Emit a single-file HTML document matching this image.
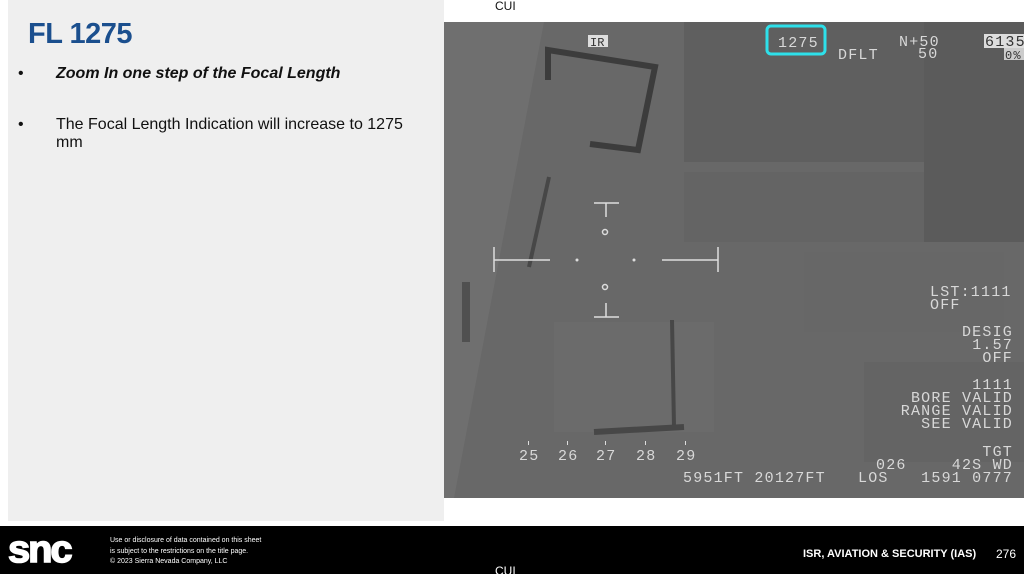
<!DOCTYPE html>
<html><head><meta charset="utf-8"><style>
*{margin:0;padding:0;box-sizing:border-box}
body{width:1024px;height:574px;background:#fff;position:relative;overflow:hidden;font-family:"Liberation Sans",sans-serif}
.panel{position:absolute;left:8px;top:0;width:436px;height:521px;background:#efefef}
h1{position:absolute;left:28px;top:18px;font-size:29px;color:#1b4f8e;font-weight:bold;letter-spacing:-0.5px}
.b{position:absolute;left:18px;font-size:16px;color:#111}
.b span{position:absolute;left:38px;white-space:nowrap}
.img{position:absolute;left:444px;top:22px;width:580px;height:476px}
.cui{position:absolute;font-size:12px;color:#111}
.foot{position:absolute;left:0;top:526px;width:1024px;height:48px;background:#000;color:#fff}
.hud{font-family:"Liberation Mono",monospace;fill:#d8d8d8;font-size:15px;letter-spacing:1.2px}
.r{text-anchor:end}
</style></head><body>
<div class="panel"></div>
<h1>FL 1275</h1>
<div class="b" style="top:65px">•<span style="font-weight:bold;font-style:italic">Zoom In one step of the Focal Length</span></div>
<div class="b" style="top:116px">•<span>The Focal Length Indication will increase to 1275<br>mm</span></div>
<div class="cui" style="left:495px;top:-1px">CUI</div>
<svg class="img" viewBox="0 0 580 476">
<rect width="580" height="476" fill="#686868"/>
<polygon points="0,0 100,0 10,476 0,476" fill="#6f6f6f"/>
<rect x="240" y="0" width="340" height="140" fill="#5f5f5f"/>
<rect x="480" y="0" width="100" height="220" fill="#5b5b5b"/>
<rect x="240" y="150" width="240" height="70" fill="#646464"/>
<rect x="360" y="230" width="200" height="80" fill="#676767"/>
<rect x="420" y="340" width="160" height="100" fill="#646464"/>
<rect x="110" y="300" width="160" height="110" fill="#6b6b6b"/>
<polyline points="104,58 104,28 211,45 194,128 146,122" fill="none" stroke="#3c3c3c" stroke-width="6"/>
<line x1="105" y1="155" x2="85" y2="245" stroke="#474747" stroke-width="4"/>
<line x1="228" y1="298" x2="230" y2="405" stroke="#474747" stroke-width="4"/>
<line x1="150" y1="410" x2="240" y2="405" stroke="#474747" stroke-width="6"/>
<rect x="18" y="260" width="8" height="60" fill="#505050"/>
<rect x="144" y="13" width="20" height="12" fill="#ddd"/>
<text x="146" y="24" class="hud" style="fill:#333;font-size:12px;letter-spacing:0">IR</text>
<rect x="323" y="4" width="58" height="28" rx="4" fill="none" stroke="#2ee0ea" stroke-width="3"/>
<text x="334" y="25" class="hud">1275</text>
<text x="394" y="37" class="hud">DFLT</text>
<text x="455" y="24" class="hud">N+50</text>
<text x="474" y="36" class="hud">50</text>
<rect x="540" y="12" width="40" height="14" fill="#ddd"/>
<text x="541" y="24" class="hud" style="fill:#333">6135</text>
<rect x="560" y="26" width="20" height="12" fill="#ccc"/>
<text x="561" y="37" class="hud" style="fill:#333;font-size:12px">0%</text>
<g stroke="#ddd" stroke-width="1.5" fill="none">
<line x1="150" y1="181" x2="175" y2="181"/><line x1="162" y1="181" x2="162" y2="195"/>
<line x1="150" y1="295" x2="175" y2="295"/><line x1="162" y1="281" x2="162" y2="295"/>
<line x1="50" y1="238" x2="106" y2="238"/><line x1="50" y1="225" x2="50" y2="250"/>
<line x1="218" y1="238" x2="274" y2="238"/><line x1="274" y1="225" x2="274" y2="250"/>
<circle cx="161" cy="210" r="2.5"/><circle cx="161" cy="265" r="2.5"/>
</g>
<circle cx="133" cy="238" r="1.5" fill="#ddd"/><circle cx="190" cy="238" r="1.5" fill="#ddd"/>
<text x="486" y="274" class="hud">LST:1111</text>
<text x="486" y="287" class="hud">OFF</text>
<text x="569" y="314" class="hud r">DESIG</text>
<text x="569" y="327" class="hud r">1.57</text>
<text x="569" y="340" class="hud r">OFF</text>
<text x="569" y="367" class="hud r">1111</text>
<text x="569" y="380" class="hud r">BORE VALID</text>
<text x="569" y="393" class="hud r">RANGE VALID</text>
<text x="569" y="406" class="hud r">SEE VALID</text>
<text x="569" y="434" class="hud r">TGT</text>
<text x="569" y="447" class="hud r">42S WD</text>
<text x="432" y="447" class="hud">026</text>
<text x="569" y="460" class="hud r">1591 0777</text>
<text x="414" y="460" class="hud">LOS</text>
<text x="239" y="460" class="hud">5951FT 20127FT</text>
<text x="75" y="438" class="hud">25</text><text x="114" y="438" class="hud">26</text><text x="152" y="438" class="hud">27</text><text x="192" y="438" class="hud">28</text><text x="232" y="438" class="hud">29</text>
<g fill="#ddd"><rect x="84" y="419" width="1" height="4"/><rect x="123" y="419" width="1" height="4"/><rect x="161" y="419" width="1" height="4"/><rect x="201" y="419" width="1" height="4"/><rect x="241" y="419" width="1" height="4"/></g>
</svg>
<div class="foot">
<div style="position:absolute;left:8px;top:3px;font:bold 38px 'Liberation Sans',sans-serif;letter-spacing:-2px;transform:scaleX(1.05);transform-origin:left;-webkit-text-stroke:1.5px #fff">snc</div>
<div style="position:absolute;left:110px;top:10px;font-size:7px;line-height:10.5px">Use or disclosure of data contained on this sheet<br>is subject to the restrictions on the title page.<br>© 2023 Sierra Nevada Company, LLC</div>
<div style="position:absolute;left:803px;top:22px;font-size:11px;font-weight:bold">ISR, AVIATION &amp; SECURITY (IAS)</div>
<div style="position:absolute;left:996px;top:21px;font-size:12px">276</div>
<div style="position:absolute;left:495px;top:38px;font-size:12px">CUI</div>
</div>
</body></html>
